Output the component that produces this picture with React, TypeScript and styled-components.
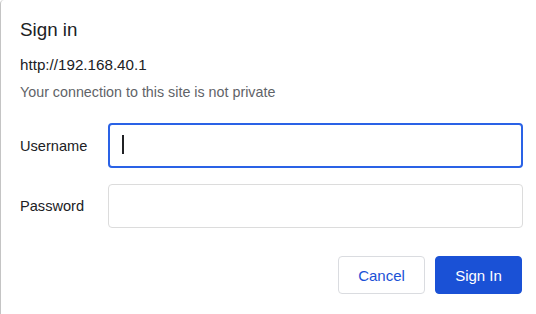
import React from "react";
import styled, { createGlobalStyle } from "styled-components";

const Global = createGlobalStyle`
  html, body { margin: 0; padding: 0; background: #ffffff; }
  body { font-family: "Liberation Sans", Arial, sans-serif; }
`;

const Dialog = styled.div`
  box-sizing: border-box;
  width: 536px;
  height: 314px;
  border-left: 1px solid #c4c4c4;
  border-top-left-radius: 4px;
  background: #ffffff;
  padding: 18px 13px 0 19px;
  display: flex;
  flex-direction: column;
`;

const Title = styled.h1`
  margin: 0;
  font-size: 18.8px;
  font-weight: 400;
  color: #202124;
  line-height: 24px;
`;

const Origin = styled.div`
  margin-top: 13px;
  font-size: 15.2px;
  color: #202124;
  line-height: 20px;
`;

const Note = styled.div`
  margin-top: 8px;
  font-size: 14.3px;
  color: #5f6368;
  line-height: 18px;
`;

const Form = styled.div`
  margin-top: 22px;
  display: grid;
  grid-template-columns: 88px 1fr;
  row-gap: 16px;
  align-items: center;
`;

const Label = styled.label`
  font-size: 14.6px;
  color: #202124;
`;

const FieldWrap = styled.div`
  position: relative;
`;

const Field = styled.input<{ $focused?: boolean }>`
  box-sizing: border-box;
  display: block;
  width: 100%;
  height: ${(p) => (p.$focused ? "45px" : "44px")};
  border-radius: 4px;
  border: ${(p) => (p.$focused ? "2px solid #2a62e6" : "1px solid #dcdcdc")};
  padding: 0 12px;
  font-size: 15px;
  font-family: inherit;
  outline: none;
  background: #fff;
  color: #202124;
`;

const Caret = styled.span`
  position: absolute;
  left: 14px;
  top: 12px;
  width: 1.5px;
  height: 19px;
  background: #202124;
`;

const Actions = styled.div`
  margin-top: 28px;
  padding-right: 1px;
  display: flex;
  justify-content: flex-end;
  gap: 10px;
`;

const Button = styled.button<{ $primary?: boolean }>`
  box-sizing: border-box;
  width: 87px;
  height: 38px;
  border-radius: 4px;
  font-family: inherit;
  font-size: 15px;
  cursor: pointer;
  border: 1px solid ${(p) => (p.$primary ? "#1a51d6" : "#dadce0")};
  background: ${(p) => (p.$primary ? "#1a51d6" : "#ffffff")};
  color: ${(p) => (p.$primary ? "#ffffff" : "#1a51d6")};
`;

export default function App() {
  return (
    <>
      <Global />
      <Dialog>
        <Title>Sign in</Title>
        <Origin>http://192.168.40.1</Origin>
        <Note>Your connection to this site is not private</Note>
        <Form>
          <Label>Username</Label>
          <FieldWrap>
            <Field $focused type="text" />
            <Caret />
          </FieldWrap>
          <Label>Password</Label>
          <Field type="password" />
        </Form>
        <Actions>
          <Button>Cancel</Button>
          <Button $primary>Sign In</Button>
        </Actions>
      </Dialog>
    </>
  );
}
